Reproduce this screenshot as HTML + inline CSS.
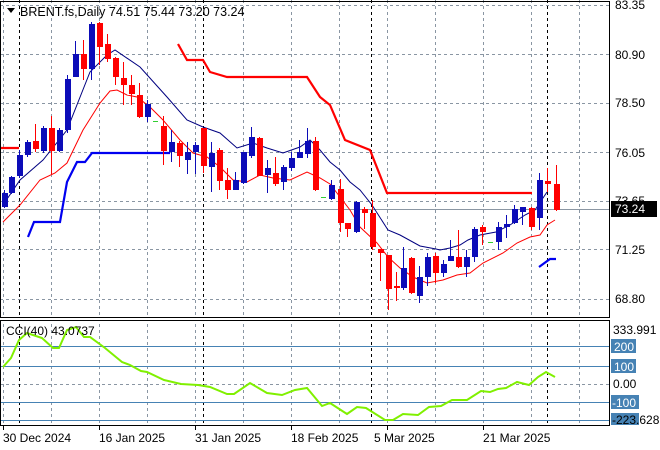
<!DOCTYPE html>
<html><head><meta charset="utf-8"><style>
body{margin:0;background:#fff;width:660px;height:450px;overflow:hidden}
svg{display:block;font-family:"Liberation Sans",sans-serif;font-size:12px}
</style></head><body>
<svg width="660" height="450" viewBox="0 0 660 450" xmlns="http://www.w3.org/2000/svg">
<rect width="660" height="450" fill="#fff"/>
<g stroke="#8a96a3" stroke-dasharray="3,3" stroke-width="1">
<path d="M0 5.5H609M0 54.5H609M0 103.5H609M0 152.5H609M0 201.5H609M0 249.5H609M0 299.5H609M0 384.5H609"/>
<path d="M3.5 0V425M51.5 0V425M99.5 0V425M147.5 0V425M195.5 0V425M243.5 0V425M291.5 0V425M339.5 0V425M387.5 0V425M435.5 0V425M483.5 0V425M531.5 0V425M579.5 0V425"/>
</g>
<g stroke="#000" stroke-dasharray="3,3"><path d="M19.5 0V425M203.5 0V425M371.5 0V425M547.5 0V425"/></g>
<path d="M0 209.5H609" stroke="#8a96a3"/>
<g stroke="#4682b4"><path d="M0 346.5H609M0 366.5H609M0 402.5H609M0 420.5H609"/></g>
<g fill="none" stroke-width="2.2">
<path stroke="#f00" d="M0 148H19M178 44L187 60H203L210 72L227 77H307L320 97L330 105L345 140L370 150L387 193H532"/>
<path stroke="#0000f0" d="M28 237L34 222H60L67 182L77 162H85L92 153H170M539 267L550 259H556"/>
</g>
<polyline fill="none" stroke="#000080" points="3,205 20,180 43,160 67,130 90,72 107,55 115,50 140,67 167,97 187,120 203,127 220,133 237,148 253,143 267,148 283,153 300,147 310,140 320,150 330,162 340,170 350,182 360,190 372,205 388,230 400,235 420,246 436,249 440,250 450,248 460,245 468,240 480,235 496,232 510,225 525,215 535,210 547,192"/>
<polyline fill="none" stroke="#f00" points="3,222 20,205 40,180 55,173 67,163 83,130 100,103 110,91 117,90 127,95 137,97 150,107 163,120 180,140 193,153 207,157 220,167 233,180 247,182 260,175 273,178 290,180 307,172 320,178 330,184 350,210 360,227 377,243 388,257 400,268 413,277 427,283 443,280 457,275 470,273 483,263 503,253 517,243 530,237 540,235 547,225 555,220"/>
<g>
<g stroke="#0c0cb8">
<path d="M4.5 190V208M11.5 176V194M19.5 150V178M27.5 140V157M43.5 126V153M59.5 128V152M67.5 75V133M75.5 41V77M91.5 22V80M147.5 100V122M171.5 130V162M187.5 142V174M195.5 142V174M211.5 142V192M235.5 172V190M243.5 152V184M251.5 127V158M267.5 160V193M283.5 165V190M291.5 152V171M299.5 140V158M307.5 128V158M331.5 180V200M356.5 201V233M403.5 247V290M419.5 266V303M427.5 253V286M443.5 260V277M450.5 240V261M466.5 250V277M474.5 227V262M498.5 222V250M506.5 215V238M514.5 205V224M522.5 207V225M539.5 173V230"/>
</g>
<g fill="#0c0cb8">
<rect x="2" y="193" width="6" height="14"/><rect x="9" y="177" width="6" height="16"/><rect x="17" y="155" width="6" height="21"/><rect x="25" y="142" width="6" height="13"/><rect x="41" y="128" width="6" height="23"/><rect x="57" y="130" width="6" height="21"/><rect x="65" y="79" width="6" height="51"/><rect x="73" y="54" width="6" height="23"/><rect x="89" y="24" width="6" height="45"/><rect x="145" y="104" width="6" height="13"/><rect x="169" y="142" width="6" height="10"/><rect x="185" y="152" width="6" height="8"/><rect x="193" y="145" width="6" height="7"/><rect x="209" y="153" width="6" height="14"/><rect x="233" y="180" width="6" height="10"/><rect x="241" y="152" width="6" height="31"/><rect x="249" y="137" width="6" height="19"/><rect x="265" y="168" width="6" height="7"/><rect x="281" y="167" width="6" height="15"/><rect x="289" y="158" width="6" height="10"/><rect x="297" y="152" width="6" height="6"/><rect x="305" y="141" width="6" height="13"/><rect x="329" y="185" width="6" height="14"/><rect x="354" y="202" width="6" height="30"/><rect x="401" y="268" width="6" height="20"/><rect x="417" y="277" width="6" height="19"/><rect x="425" y="257" width="6" height="20"/><rect x="441" y="264" width="6" height="9"/><rect x="448" y="256" width="6" height="5"/><rect x="464" y="257" width="6" height="10"/><rect x="472" y="229" width="6" height="28"/><rect x="496" y="227" width="6" height="15"/><rect x="504" y="224" width="6" height="3"/><rect x="512" y="209" width="6" height="14"/><rect x="520" y="207" width="6" height="5"/><rect x="537" y="180" width="6" height="38"/>
</g>
<g stroke="#f00"><path d="M35.5 124V152M51.5 116V174M83.5 40V80M99.5 22V65M107.5 34V62M115.5 57V85M123.5 62V105M131.5 75V105M139.5 83V118M163.5 116V165M179.5 141V167M203.5 128V173M219.5 148V190M227.5 168V199M259.5 137V176M275.5 157V186M315.5 137V191M340.5 179V232M347.5 223V237M364.5 207V229M372.5 200V250M380.5 249V281M388.5 255V310M396.5 272V301M411.5 257V294M435.5 253V283M458.5 230V268M482.5 225V245M531.5 207V230M547.5 168V192M556.5 165V211"/></g>
<g fill="#f00">
<rect x="33" y="141" width="6" height="8"/><rect x="49" y="128" width="6" height="23"/><rect x="81" y="54" width="6" height="15"/><rect x="97" y="23" width="6" height="24"/><rect x="105" y="44" width="6" height="15"/><rect x="113" y="58" width="6" height="19"/><rect x="121" y="78" width="6" height="7"/><rect x="129" y="85" width="6" height="9"/><rect x="137" y="95" width="6" height="22"/><rect x="161" y="126" width="6" height="25"/><rect x="177" y="143" width="6" height="13"/><rect x="201" y="128" width="6" height="38"/><rect x="217" y="150" width="6" height="31"/><rect x="225" y="180" width="6" height="10"/><rect x="257" y="138" width="6" height="38"/><rect x="273" y="173" width="6" height="11"/><rect x="313" y="141" width="6" height="49"/><rect x="338" y="189" width="6" height="34"/><rect x="345" y="223" width="6" height="6"/><rect x="362" y="209" width="6" height="4"/><rect x="370" y="213" width="6" height="34"/><rect x="378" y="249" width="6" height="4"/><rect x="386" y="255" width="6" height="34"/><rect x="394" y="286" width="6" height="2"/><rect x="409" y="258" width="6" height="35"/><rect x="433" y="256" width="6" height="17"/><rect x="456" y="257" width="6" height="10"/><rect x="480" y="227" width="6" height="5"/><rect x="529" y="208" width="6" height="19"/><rect x="545" y="181" width="6" height="3"/><rect x="554" y="184" width="6" height="26"/>
</g>
<g stroke="#32cd32"><path d="M153 121.5H158M321 197.5H326M488 242.5H493"/></g>
</g>
<polyline fill="none" stroke="#80f000" stroke-width="2" points="3,367 11,358 19,340 27,333 42,338 53,348 59,348 67,330 76,327 84,337 90,337 105,348 122,362 130,365 141,371 147,372 164,380 181,384 198,385 210,387 227,394 234,394 250,383 267,393 282,395 295,390 307,388 322,406 330,403 347,414 357,407 366,408 385,420 393,420 403,414 418,415 429,407 441,406 452,400 467,400 481,391 490,392 498,389 506,388 517,382 529,385 538,377 546,372 555,377"/>
<g fill="none" stroke="#000"><rect x="0.5" y="1.5" width="609" height="316"/><rect x="0.5" y="320.5" width="609" height="105"/></g>
<rect x="0" y="318" width="609" height="2" fill="#fff"/>
<path d="M7 8H15L11 13Z" fill="#000"/>
<text x="20" y="16" fill="#000" font-size="12.5">BRENT.fs,Daily  74.51 75.44 73.20 73.24</text>
<text x="6" y="335" fill="#000">CCI(40) 43.0737</text>
<g fill="#000">
<text x="615" y="9">83.35</text><text x="615" y="59">80.90</text><text x="615" y="107">78.50</text><text x="615" y="157">76.05</text><text x="615" y="205">73.65</text><text x="615" y="254">71.25</text><text x="615" y="303">68.80</text>
</g>
<rect x="611" y="201" width="46" height="16" fill="#000"/><text x="615" y="213" fill="#fff">73.24</text>
<g fill="#4682b4"><rect x="611" y="339" width="25" height="14"/><rect x="611" y="359" width="25" height="14"/><rect x="611" y="395" width="28" height="14"/><rect x="611" y="413" width="28" height="12"/></g>
<g fill="#000"><text x="613" y="334">333.991</text><text x="613" y="388">0.00</text></g>
<g fill="#fff"><text x="614" y="351">200</text><text x="614" y="371">100</text><text x="612" y="407">-100</text></g>
<text x="612" y="424" fill="#000">-223.628</text>
<g stroke="#000"><path d="M3.5 426V430M99.5 426V430M195.5 426V430M291.5 426V430M387.5 426V430M483.5 426V430"/></g>
<g fill="#000"><text x="3" y="442">30 Dec 2024</text><text x="99" y="442">16 Jan 2025</text><text x="195" y="442">31 Jan 2025</text><text x="291" y="442">18 Feb 2025</text><text x="374" y="442">5 Mar 2025</text><text x="483" y="442">21 Mar 2025</text></g>
</svg>
</body></html>
